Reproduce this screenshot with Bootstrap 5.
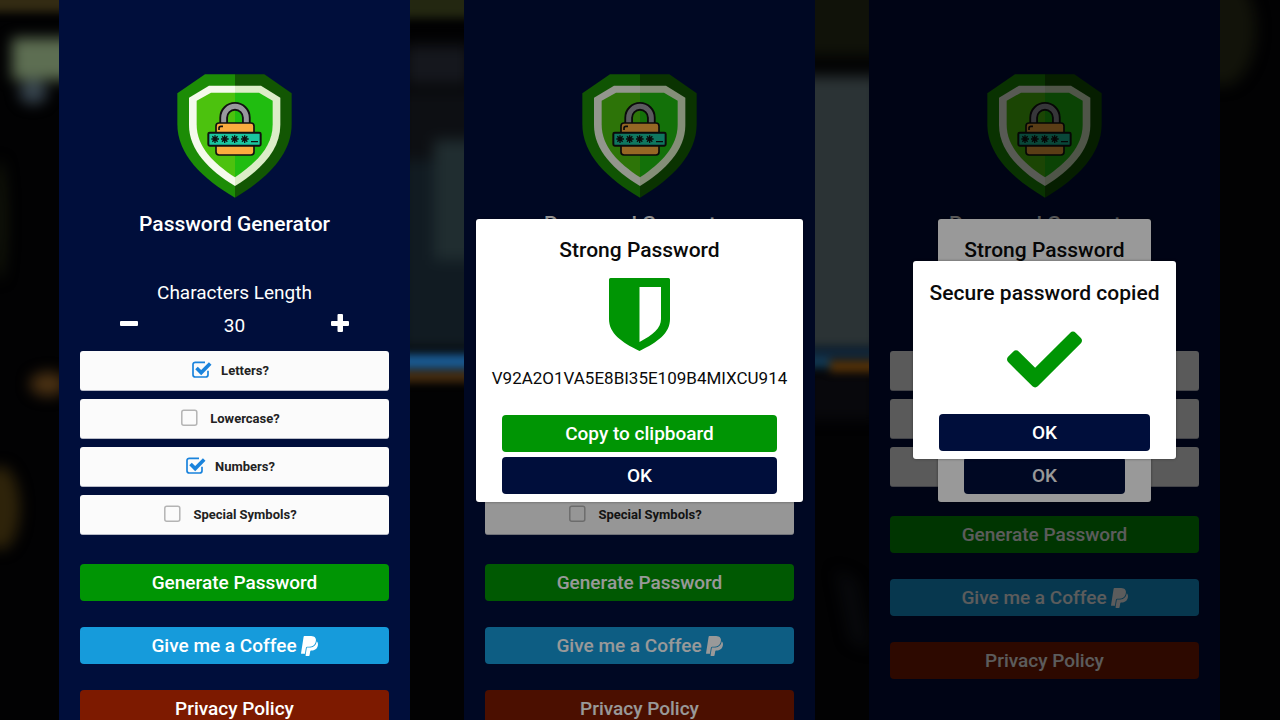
<!DOCTYPE html>
<html lang="en">
<head>
<meta charset="utf-8">
<meta name="viewport" content="width=device-width, initial-scale=1">
<title>Password Generator</title>
<link rel="stylesheet" href="https://cdn.jsdelivr.net/npm/bootstrap@5.3.0/dist/css/bootstrap.min.css">
<style>
  :root { --navy: #000e3b; --green: #009504; }
  body { background: #020203; font-family: Roboto, "Liberation Sans", sans-serif; }
  .stage { padding: 0 60px 0 59px; gap: 54px; }
  .phone { flex: 1 1 0; min-width: 0; background: var(--navy); color: #fff; padding: 74px 21px 0; }
  .logo { width: 115px; height: 124px; }
  .app-title { font-size: 21px; line-height: 24px; font-weight: 500; margin: 14px 0 0; }
  .len-label { font-size: 19px; line-height: 24px; margin-top: 45px; }
  .stepper { padding: 0 40px; margin: 9px 0 13px; font-size: 19px; line-height: 24px; }
  .step-btn { line-height: 0; color: #fff; }
  .option { height: 40px; background: #fbfbfb; color: #222; border-radius: 3px; border-bottom: 1px solid #b9bcc8; padding-right: 8px; gap: 9px; }
  .option label { font-size: 13px; line-height: 20px; font-weight: 700; }
  .tick { appearance: none; width: 20px; height: 18px; margin: 0 0 2px;
    background: url("data:image/svg+xml,%3Csvg xmlns='http://www.w3.org/2000/svg' viewBox='0 0 20 18'%3E%3Crect x='.8' y='1.2' width='15' height='15' rx='2' fill='none' stroke='%23b4b4b4' stroke-width='1.5'/%3E%3C/svg%3E") no-repeat; }
  .tick:checked { background-image: url("data:image/svg+xml,%3Csvg xmlns='http://www.w3.org/2000/svg' viewBox='0 0 20 18' fill='none' stroke='%231a83dc'%3E%3Cpath d='M13 1.300H3.300a2.300 2.300 0 0 0-2.300 2.300v10.100a2.300 2.300 0 0 0 2.300 2.300h10.400a2.300 2.300 0 0 0 2.300-2.300v-4' stroke-width='1.7'/%3E%3Cpath d='M4.500 7l4.700 4.600 9-9' stroke-width='3.6'/%3E%3C/svg%3E"); }
  .bar-btn { --bs-btn-color: #fff; --bs-btn-hover-color: #fff; --bs-btn-font-size: 19px; --bs-btn-font-weight: 500; --bs-btn-padding-y: 6px;
    --bs-btn-border-width: 0; --bs-btn-border-radius: 4px; line-height: 25px; }
  .bar-green { background: var(--green); }
  .bar-blue { background: #169bdb; }
  .bar-red { background: #7d1a00; }
  .bar-navy { background: var(--navy); }
  .actions { gap: 26px; margin-top: 29px; }
  .shade { background: rgba(0, 0, 0, .4); }
  .popup { background: #fff; color: #0a0a0a; border-radius: 3px; padding: 19px 0 8px; box-shadow: 0 0 3px rgba(0, 0, 0, .4); }
  .popup h2 { font-size: 21px; line-height: 24px; font-weight: 500; margin: 0; }
  .popup-wide { width: 327px; }
  .popup-mid { width: 263px; height: 198px; padding-top: 20px; }
  .popup-slim { width: 213px; height: 283px; }
  .popup-acts { padding: 0 26px; gap: 5px; }
  .secret { font-size: 17px; line-height: 24px; margin: 15px 0 25px; }
</style>
</head>
<body class="overflow-hidden">
<svg width="0" height="0" class="position-absolute" aria-hidden="true">
  <symbol id="logo" viewBox="51 42 345 372">
    <path fill="#1c8c06" d="M225 43H135L52 100v92c0 92 75 164 173 221z"/>
    <path fill="#125603" d="M225 43h88l82 57v92c0 92-74 164-170 221z"/>
    <path fill="#f5faec" d="M225 77h-78l-60 36v82c0 76 60 136 138 183z"/>
    <path fill="#dcedc8" d="M225 77h78l58 36v82c0 76-60 136-136 183z"/>
    <path fill="#4cc20e" d="M225 98h-72l-43 24v72c0 66 50 115 115 158z"/>
    <path fill="#20bd10" d="M225 98h72l41 24v72c0 66-50 115-113 158z"/>
    <path fill="none" stroke="#111" stroke-width="26" d="M191 192v-19a34 34 0 0 1 68 0v19"/>
    <path fill="none" stroke="#98989e" stroke-width="15" d="M191 192v-19a34 34 0 0 1 68 0v19"/>
    <rect x="168" y="189" width="114" height="96" rx="9" fill="#fbac3f" stroke="#111" stroke-width="5"/>
    <path fill="none" stroke="#111" stroke-width="5" d="M177 210v-5q0-6 6-6h6"/>
    <rect x="145" y="218" width="157" height="39" rx="4" fill="#1ac6a0" stroke="#111" stroke-width="6"/>
    <path stroke="#111" stroke-width="4" d="M165 226v23M154 237h23M157 229l16 16M173 229l-16 16M194 226v23M183 237h23M186 229l16 16M202 229l-16 16M224 226v23M213 237h23M216 229l16 16M232 229l-16 16M254 226v23M243 237h23M246 229l16 16M262 229l-16 16M273 245h21"/>
  </symbol>
  <symbol id="paypal" viewBox="0 30 384 453">
    <path fill="currentColor" d="M111.4 295.9c-3.5 19.2-17.4 108.7-21.5 134-.3 1.8-1 2.5-3 2.5H12.3c-7.6 0-13.1-6.6-12.1-13.9L58.8 46.6c1.5-9.6 10.1-16.9 20-16.9 152.3 0 165.1-3.7 204 11.4 60.1 23.3 65.6 79.5 44 140.3-21.5 62.6-72.5 89.5-140.1 90.3-43.4.7-69.5-7-75.3 24.2zM357.1 152c-1.8-1.3-2.5-1.8-3 1.3-2 11.4-5.1 22.5-8.8 33.6-39.9 113.8-150.5 103.9-204.5 103.9-6.1 0-10.1 3.3-10.9 9.4-22.6 140.4-27.1 169.7-27.1 169.7-1 7.1 3.5 12.9 10.6 12.9h63.5c8.6 0 15.7-6.3 17.4-14.9.7-5.4-1.1 6.1 14.4-91.3 4.6-22 14.3-19.7 29.3-19.7 71 0 126.4-28.8 142.9-112.3 6.5-34.8 4.6-71.4-23.8-92.6z"/>
  </symbol>
</svg>

<!-- out-of-focus photo behind the screens -->
<svg class="position-absolute top-0 start-0 w-100 h-100" viewBox="0 0 1280 720" preserveAspectRatio="none" aria-hidden="true">
  <filter id="soft" x="-50%" y="-50%" width="200%" height="200%" color-interpolation-filters="sRGB"><feGaussianBlur stdDeviation="7"/></filter>
  <filter id="fine" x="-50%" y="-100%" width="200%" height="300%" color-interpolation-filters="sRGB"><feGaussianBlur stdDeviation="4"/></filter>
  <g filter="url(#soft)">
    <rect x="12" y="38" width="70" height="42" fill="#5d6e52"/>
    <ellipse cx="33" cy="92" rx="14" ry="12" fill="#36434d"/>
    <ellipse cx="48" cy="384" rx="18" ry="12" fill="#4a3113"/>
    <ellipse cx="0" cy="508" rx="20" ry="42" fill="#2e230a"/>
    <ellipse cx="0" cy="220" rx="6" ry="60" fill="#14170a"/>
    <rect x="405" y="45" width="65" height="40" fill="#15171d"/>
    <rect x="400" y="90" width="80" height="90" fill="#0d0f13"/>
    <rect x="400" y="160" width="80" height="190" fill="#111b22"/>
    <rect x="434" y="140" width="50" height="120" fill="#202d30"/>
    <rect x="800" y="76" width="80" height="276" fill="#2b3335"/>
    <rect x="800" y="-20" width="80" height="76" fill="#101209"/>
    <rect x="806" y="370" width="70" height="50" fill="#08080c"/>
    <ellipse cx="1222" cy="30" rx="34" ry="56" fill="#12130a"/>
    <path d="M836 570l20 10 14 70-20-10z" fill="#08090c"/>
  </g>
  <g filter="url(#fine)">
    <rect x="-10" y="-10" width="90" height="22" fill="#332b13"/>
    <rect x="400" y="-10" width="80" height="28" fill="#232711"/>
    <rect x="400" y="371" width="80" height="11" fill="#4a2f10"/>
    <rect x="395" y="354" width="90" height="15" fill="#1a5a92"/>
    <rect x="800" y="347" width="80" height="12" fill="#10263a"/>
    <rect x="800" y="358" width="30" height="10" fill="#123a55"/>
    <rect x="830" y="361" width="50" height="11" fill="#593509"/>
  </g>
</svg>

<main class="stage d-flex vh-100 overflow-hidden position-relative">

  <section class="phone position-relative overflow-hidden text-center">
    <svg class="logo d-block mx-auto" role="img" aria-label="Shield with padlock"><use href="#logo"/></svg>
    <h1 class="app-title">Password Generator</h1>
    <div class="len-label">Characters Length</div>
    <div class="stepper d-flex justify-content-between align-items-start">
      <button type="button" class="step-btn btn border-0 p-0" aria-label="Fewer characters"><svg width="18" height="18" viewBox="0 0 18 18"><rect y="7" width="18" height="5" rx="1" fill="#fff"/></svg></button>
      <output>30</output>
      <button type="button" class="step-btn btn border-0 p-0" aria-label="More characters"><svg width="18" height="18" viewBox="0 0 18 18"><path d="M7.500 0h3.500a1 1 0 0 1 1 1v6h5a1 1 0 0 1 1 1v3a1 1 0 0 1-1 1h-5v5a1 1 0 0 1-1 1H7.500a1 1 0 0 1-1-1v-5H1a1 1 0 0 1-1-1V8a1 1 0 0 1 1-1h5.500V1a1 1 0 0 1 1-1z" fill="#fff"/></svg></button>
    </div>
    <div class="d-grid gap-2">
      <div class="option d-flex justify-content-center align-items-center"><input class="tick" type="checkbox" id="a1" checked><label for="a1">Letters?</label></div>
      <div class="option d-flex justify-content-center align-items-center"><input class="tick" type="checkbox" id="a2"><label for="a2">Lowercase?</label></div>
      <div class="option d-flex justify-content-center align-items-center"><input class="tick" type="checkbox" id="a3" checked><label for="a3">Numbers?</label></div>
      <div class="option d-flex justify-content-center align-items-center"><input class="tick" type="checkbox" id="a4"><label for="a4">Special Symbols?</label></div>
    </div>
    <div class="actions d-grid">
      <button type="button" class="btn bar-btn bar-green">Generate Password</button>
      <button type="button" class="btn bar-btn bar-blue d-flex justify-content-center align-items-center gap-1">Give me a Coffee <svg width="17" height="20" aria-hidden="true"><use href="#paypal"/></svg></button>
      <button type="button" class="btn bar-btn bar-red">Privacy Policy</button>
    </div>
  </section>

  <section class="phone position-relative overflow-hidden text-center">
    <svg class="logo d-block mx-auto" role="img" aria-label="Shield with padlock"><use href="#logo"/></svg>
    <h1 class="app-title">Password Generator</h1>
    <div class="len-label invisible">Characters Length</div>
    <div class="stepper invisible">30</div>
    <div class="d-grid gap-2">
      <div class="option"></div>
      <div class="option"></div>
      <div class="option"></div>
      <div class="option d-flex justify-content-center align-items-center"><input class="tick" type="checkbox" id="b4"><label for="b4">Special Symbols?</label></div>
    </div>
    <div class="actions d-grid">
      <button type="button" class="btn bar-btn bar-green">Generate Password</button>
      <button type="button" class="btn bar-btn bar-blue d-flex justify-content-center align-items-center gap-1">Give me a Coffee <svg width="17" height="20" aria-hidden="true"><use href="#paypal"/></svg></button>
      <button type="button" class="btn bar-btn bar-red">Privacy Policy</button>
    </div>
    <div class="shade position-absolute top-0 start-0 w-100 h-100 d-flex justify-content-center align-items-center">
      <div class="popup popup-wide" role="dialog" aria-labelledby="strong">
        <h2 id="strong">Strong Password</h2>
        <svg class="d-block mx-auto mt-3" width="61" height="73" viewBox="0 0 61 73" aria-hidden="true"><path fill="#009504" fill-rule="evenodd" d="M1.500 0h58a1.500 1.500 0 0 1 1.500 1.500V41c0 14-12 23-30.500 32C12 64 0 55 0 41V1.500A1.500 1.500 0 0 1 1.500 0zM30.500 9v55C44 57 52 50 52 41V9z"/></svg>
        <div class="secret">V92A2O1VA5E8BI35E109B4MIXCU914</div>
        <div class="popup-acts d-grid">
          <button type="button" class="btn bar-btn bar-green">Copy to clipboard</button>
          <button type="button" class="btn bar-btn bar-navy">OK</button>
        </div>
      </div>
    </div>
  </section>

  <section class="phone position-relative overflow-hidden text-center">
    <svg class="logo d-block mx-auto" role="img" aria-label="Shield with padlock"><use href="#logo"/></svg>
    <h1 class="app-title">Password Generator</h1>
    <div class="len-label invisible">Characters Length</div>
    <div class="stepper invisible">30</div>
    <div class="d-grid gap-2">
      <div class="option"></div>
      <div class="option"></div>
      <div class="option"></div>
    </div>
    <div class="actions d-grid">
      <button type="button" class="btn bar-btn bar-green">Generate Password</button>
      <button type="button" class="btn bar-btn bar-blue d-flex justify-content-center align-items-center gap-1">Give me a Coffee <svg width="17" height="20" aria-hidden="true"><use href="#paypal"/></svg></button>
      <button type="button" class="btn bar-btn bar-red">Privacy Policy</button>
    </div>
    <div class="shade position-absolute top-0 start-0 w-100 h-100 d-flex justify-content-center align-items-center">
      <div class="popup popup-slim d-flex flex-column" role="dialog" aria-labelledby="strong2">
        <h2 id="strong2">Strong Password</h2>
        <div class="popup-acts d-grid mt-auto"><button type="button" class="btn bar-btn bar-navy">OK</button></div>
      </div>
    </div>
    <div class="shade position-absolute top-0 start-0 w-100 h-100 d-flex justify-content-center align-items-center">
      <div class="popup popup-mid d-flex flex-column justify-content-between" role="dialog" aria-labelledby="copied">
        <h2 id="copied">Secure password copied</h2>
        <svg class="mx-auto" width="75" height="57" viewBox="0 65 512 382" aria-hidden="true"><path fill="#009504" d="M173.898 439.404l-166.400-166.400c-9.997-9.997-9.997-26.206 0-36.204l36.203-36.204c9.997-9.998 26.207-9.998 36.204 0L192 312.690 432.095 72.596c9.997-9.997 26.207-9.997 36.204 0l36.203 36.204c9.997 9.997 9.997 26.206 0 36.204l-294.400 294.401c-9.998 9.997-26.207 9.997-36.204-.001z"/></svg>
        <div class="popup-acts d-grid"><button type="button" class="btn bar-btn bar-navy">OK</button></div>
      </div>
    </div>
  </section>
</main>
<script src="https://cdn.jsdelivr.net/npm/bootstrap@5.3.0/dist/js/bootstrap.bundle.min.js"></script>
</body>
</html>
